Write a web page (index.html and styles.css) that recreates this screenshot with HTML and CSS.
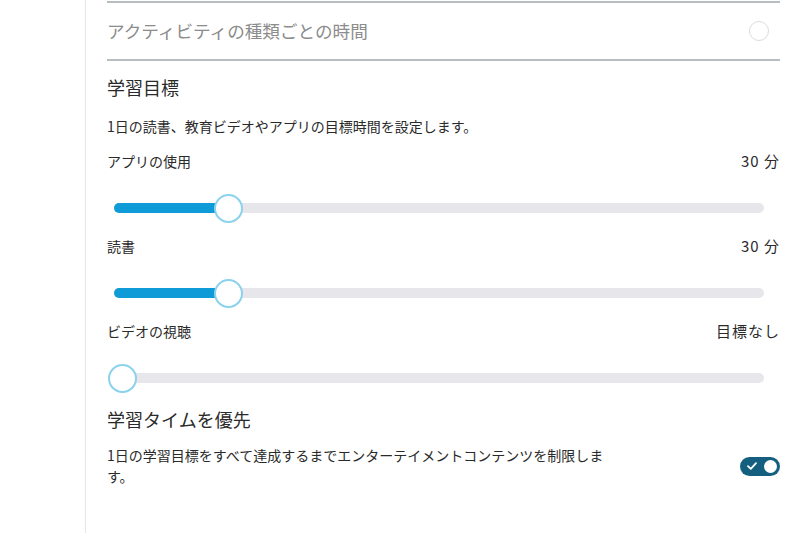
FILE: index.html
```html
<!DOCTYPE html>
<html lang="ja">
<head>
<meta charset="utf-8">
<link rel="stylesheet" href="styles.css">
</head>
<body>
<div class="page">
  <div class="sidebar"></div>
  <main class="main">
    <div class="option-row">
      <span class="option-label">アクティビティの種類ごとの時間</span>
      <span class="radio"></span>
    </div>

    <h2 class="heading first">学習目標</h2>
    <p class="desc">1日の読書、教育ビデオやアプリの目標時間を設定します。</p>

    <div class="goal first-goal">
      <div class="goal-head"><span>アプリの使用</span><span class="value">30 分</span></div>
      <div class="slider">
        <div class="track"></div>
        <div class="fill" style="width:114px"></div>
        <div class="thumb" style="left:107px"></div>
      </div>
    </div>

    <div class="goal">
      <div class="goal-head"><span>読書</span><span class="value">30 分</span></div>
      <div class="slider">
        <div class="track"></div>
        <div class="fill" style="width:114px"></div>
        <div class="thumb" style="left:107px"></div>
      </div>
    </div>

    <div class="goal">
      <div class="goal-head"><span>ビデオの視聴</span><span class="value">目標なし</span></div>
      <div class="slider">
        <div class="track"></div>
        <div class="thumb" style="left:1px"></div>
      </div>
    </div>

    <h2 class="heading">学習タイムを優先</h2>
    <div class="toggle-row">
      <p class="desc wrap">1日の学習目標をすべて達成するまでエンターテイメントコンテンツを制限します。</p>
      <span class="toggle">
        <svg class="check" width="10" height="8" viewBox="0 0 10 8"><path d="M1 4.2 L3.8 6.8 L9 1.2" fill="none" stroke="#fff" stroke-width="1.8" stroke-linecap="round" stroke-linejoin="round"/></svg>
        <span class="knob"></span>
      </span>
    </div>
  </main>
</div>
</body>
</html>
```
FILE: styles.css
```css
html, body {
  margin: 0;
  padding: 0;
  background: #fff;
}
body {
  font-family: "Noto Sans CJK JP", "Noto Sans", sans-serif;
  color: #333;
}
.page {
  display: flex;
  min-height: 533px;
}
.sidebar {
  width: 85px;
  flex: none;
}
.main {
  flex: 1;
  border-left: 1px solid #e6e6e6;
  padding: 1px 20px 0 21px;
  min-height: 532px;
}
.option-row {
  display: flex;
  align-items: center;
  justify-content: space-between;
  height: 56px;
  border-top: 2px solid #b7bec2;
  border-bottom: 2px solid #b7bec2;
}
.option-label {
  font-size: 17.6px;
  color: #8c8c8c;
  line-height: 24px;
}
.radio {
  width: 18px;
  height: 18px;
  border: 1.5px solid #dcdcdc;
  border-radius: 50%;
  margin-right: 11px;
}
.heading {
  margin: 15px 0 0;
  font-size: 18px;
  font-weight: 400;
  line-height: 24px;
  color: #2a2a2a;
}
.heading.first {
  margin-top: 14px;
}
.desc {
  margin: 17px 0 0;
  font-size: 14px;
  line-height: 20px;
  color: #2a2a2a;
}
.goal {
  margin-top: 14px;
}
.goal.first-goal {
  margin-top: 15px;
}
.goal-head {
  display: flex;
  justify-content: space-between;
  align-items: center;
  font-size: 14px;
  line-height: 20px;
  color: #2a2a2a;
}
.value {
  font-size: 15px;
  letter-spacing: 1px;
}
.slider {
  position: relative;
  height: 28px;
  margin-top: 23px;
}
.track {
  position: absolute;
  left: 7px;
  right: 16px;
  top: 9px;
  height: 10px;
  border-radius: 5px;
  background: #e7e6ea;
}
.fill {
  position: absolute;
  left: 7px;
  top: 9px;
  height: 10px;
  border-radius: 5px 0 0 5px;
  background: #0e9bd7;
}
.thumb {
  position: absolute;
  top: 0;
  width: 25px;
  height: 25px;
  border: 2px solid #8bd2ec;
  border-radius: 50%;
  background: #fff;
}
.toggle-row {
  display: flex;
  align-items: center;
  justify-content: space-between;
  margin-top: 14px;
}
.desc.wrap {
  margin: 0;
  width: 510px;
  line-height: 21px;
}
.toggle {
  display: flex;
  align-items: center;
  justify-content: space-between;
  width: 40px;
  height: 19px;
  box-sizing: border-box;
  padding: 0 3px 0 7px;
  border-radius: 10px;
  background: #145f7f;
}
.knob {
  width: 13px;
  height: 13px;
  border-radius: 50%;
  background: #fff;
}
.check {
  display: block;
}
```
